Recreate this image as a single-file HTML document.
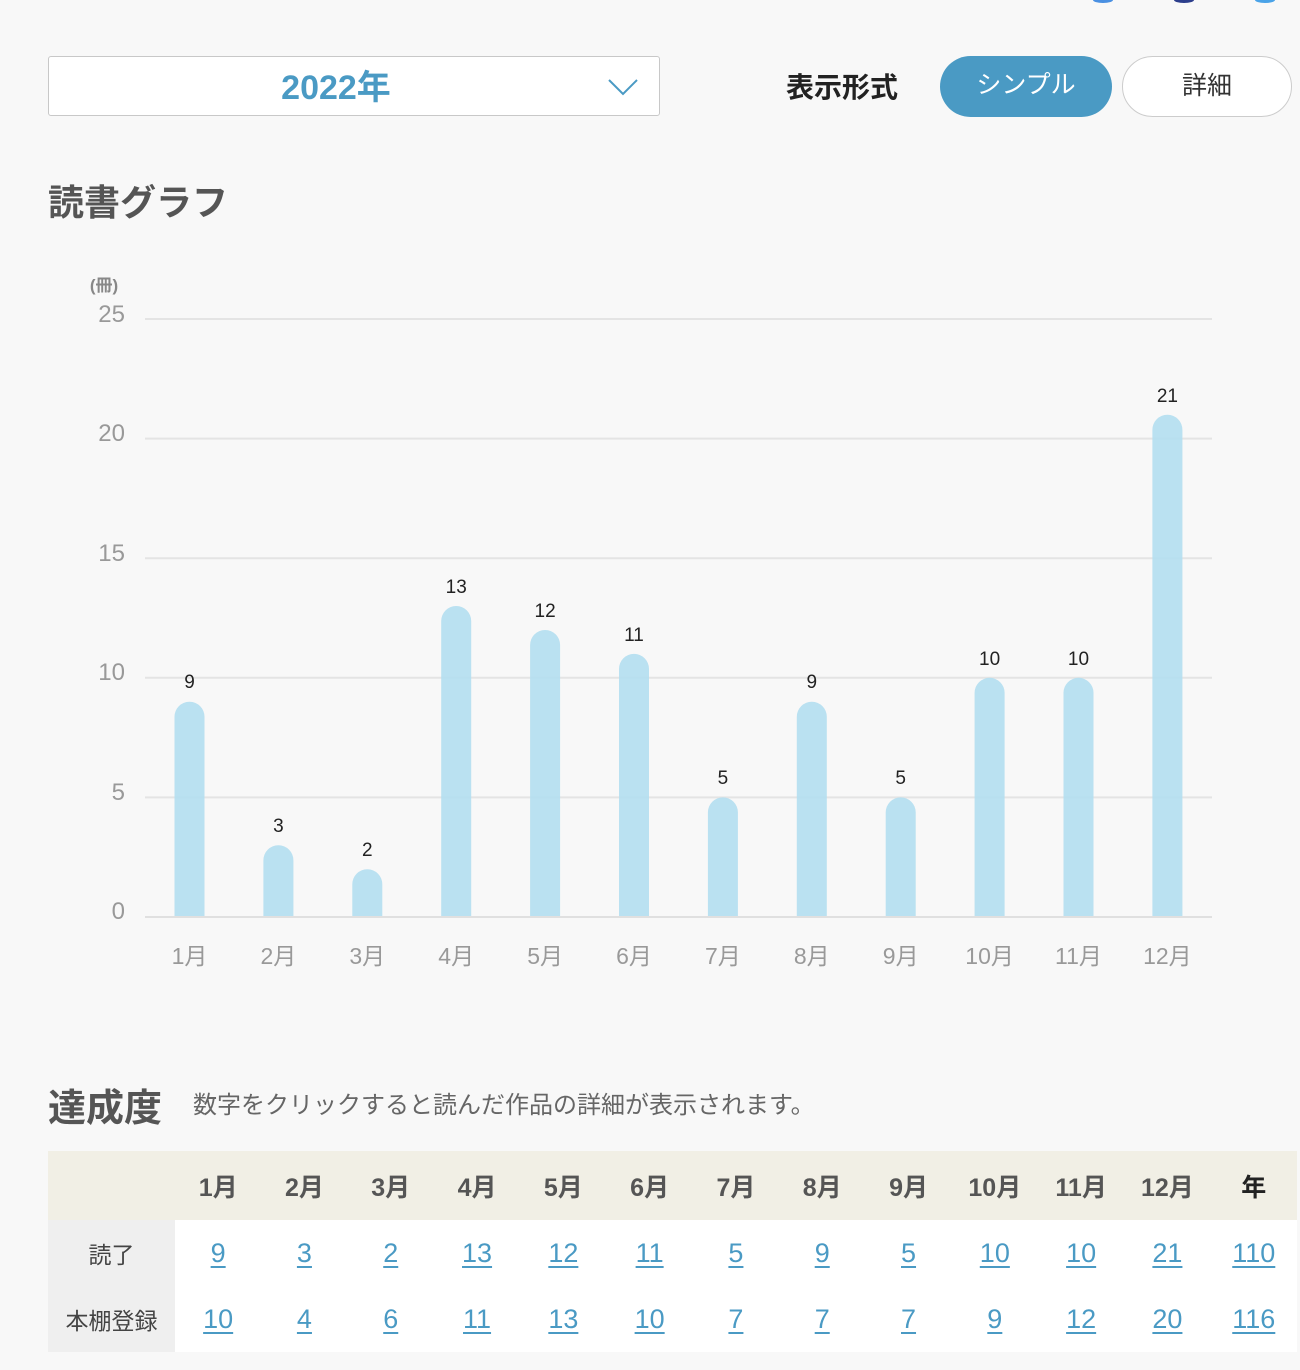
<!DOCTYPE html>
<html><head><meta charset="utf-8">
<style>
html,body{margin:0;padding:0;background:#f8f8f8;width:1300px;height:1370px;overflow:hidden;font-family:"Liberation Sans","Noto Sans CJK JP",sans-serif;}
.abs{position:absolute}
.sel{left:48px;top:56px;width:612px;height:60px;background:#fff;border:1px solid #c8c8c8;border-radius:3px;box-sizing:border-box}
.sel span{position:absolute;left:0;width:574px;top:3px;text-align:center;font-size:34px;font-weight:bold;color:#4a9ac4}
.lbl{left:786px;top:66px;font-size:28px;font-weight:bold;color:#222}
.btn{top:56px;height:61px;border-radius:31px;box-sizing:border-box;text-align:center;line-height:58px;font-size:25px}
.b1{left:940px;width:172px;background:#4a9ac4;color:#fff}
.b2{left:1122px;width:170px;background:#fff;border:1.5px solid #ccc;color:#333}
h2{margin:0;position:absolute;font-size:36px;color:#555;font-weight:bold}
table{position:absolute;left:48px;top:1151px;width:1249px;border-collapse:collapse;table-layout:fixed}
td{text-align:center;padding:0}
tr.h td{background:#f1efe5;height:69px;font-size:25px;font-weight:bold;color:#555}
tr.r td{background:#fff;height:66px;font-size:27px}
tr.r td:first-child{background:#efefef;font-size:23px;color:#444}
a{color:#4a9ac4;text-decoration:underline;text-underline-offset:4px}
</style></head><body>
<svg class="abs" style="left:0;top:0" width="1300" height="10"><ellipse cx="1103" cy="0" rx="10" ry="3" fill="#4a90e2"/><ellipse cx="1184" cy="0" rx="10" ry="3" fill="#2c3e8c"/><ellipse cx="1265" cy="0" rx="10" ry="3" fill="#4aa3e8"/></svg>
<div class="abs sel"><span>2022年</span>
<svg class="abs" style="left:558px;top:20px" width="32" height="20"><path d="M2 3 L16 17 L30 3" fill="none" stroke="#4a9ac4" stroke-width="2"/></svg></div>
<div class="abs lbl">表示形式</div>
<div class="abs btn b1">シンプル</div>
<div class="abs btn b2">詳細</div>
<h2 style="left:48px;top:174px">読書グラフ</h2>

<svg class="abs" style="left:0;top:0" width="1300" height="1000" font-family="Liberation Sans, Noto Sans CJK JP, sans-serif">
<text x="104" y="291" font-size="17" fill="#888" text-anchor="middle" font-weight="bold">(冊)</text>
<g fill="#999" font-size="24" text-anchor="end">
<text x="125" y="322">25</text><text x="125" y="441">20</text><text x="125" y="561">15</text><text x="125" y="680">10</text><text x="125" y="800">5</text><text x="125" y="919">0</text>
</g>
<g stroke="#e4e4e4" stroke-width="2">
<line x1="145" x2="1212" y1="319" y2="319"/><line x1="145" x2="1212" y1="438.6" y2="438.6"/><line x1="145" x2="1212" y1="558.2" y2="558.2"/><line x1="145" x2="1212" y1="677.8" y2="677.8"/><line x1="145" x2="1212" y1="797.4" y2="797.4"/>
</g>
<g fill="#b3def0" fill-opacity="0.9">
<path d="M174.5 917V716.7A15 15 0 0 1 204.5 716.7V917Z"/>
<path d="M263.4 917V860.2A15 15 0 0 1 293.4 860.2V917Z"/>
<path d="M352.3 917V884.2A15 15 0 0 1 382.3 884.2V917Z"/>
<path d="M441.2 917V621A15 15 0 0 1 471.2 621V917Z"/>
<path d="M530.1 917V645A15 15 0 0 1 560.1 645V917Z"/>
<path d="M619 917V668.9A15 15 0 0 1 649 668.9V917Z"/>
<path d="M707.9 917V812.4A15 15 0 0 1 737.9 812.4V917Z"/>
<path d="M796.8 917V716.7A15 15 0 0 1 826.8 716.7V917Z"/>
<path d="M885.7 917V812.4A15 15 0 0 1 915.7 812.4V917Z"/>
<path d="M974.6 917V692.8A15 15 0 0 1 1004.6 692.8V917Z"/>
<path d="M1063.5 917V692.8A15 15 0 0 1 1093.5 692.8V917Z"/>
<path d="M1152.4 917V429.7A15 15 0 0 1 1182.4 429.7V917Z"/>
</g>
<line x1="145" x2="1212" y1="917" y2="917" stroke="#e0e0e0" stroke-width="2"/>
<g fill="#222" font-size="19" text-anchor="middle">
<text x="189.5" y="688">9</text><text x="278.4" y="832">3</text><text x="367.3" y="856">2</text><text x="456.2" y="593">13</text><text x="545.1" y="617">12</text><text x="634" y="641">11</text><text x="722.9" y="784">5</text><text x="811.8" y="688">9</text><text x="900.7" y="784">5</text><text x="989.6" y="665">10</text><text x="1078.5" y="665">10</text><text x="1167.4" y="402">21</text>
</g>
<g fill="#999" font-size="23" text-anchor="middle">
<text x="189.5" y="964">1月</text><text x="278.4" y="964">2月</text><text x="367.3" y="964">3月</text><text x="456.2" y="964">4月</text><text x="545.1" y="964">5月</text><text x="634" y="964">6月</text><text x="722.9" y="964">7月</text><text x="811.8" y="964">8月</text><text x="900.7" y="964">9月</text><text x="989.6" y="964">10月</text><text x="1078.5" y="964">11月</text><text x="1167.4" y="964">12月</text>
</g>
</svg>

<h2 style="left:48px;top:1077px;font-size:38px">達成度</h2>
<div class="abs" style="left:193px;top:1085px;font-size:24px;color:#666">数字をクリックすると読んだ作品の詳細が表示されます。</div>

<table>
<colgroup><col style="width:127px"><col span="13"></colgroup>
<tr class="h"><td></td><td>1月</td><td>2月</td><td>3月</td><td>4月</td><td>5月</td><td>6月</td><td>7月</td><td>8月</td><td>9月</td><td>10月</td><td>11月</td><td>12月</td><td style="color:#222">年</td></tr>
<tr class="r"><td>読了</td><td><a>9</a></td><td><a>3</a></td><td><a>2</a></td><td><a>13</a></td><td><a>12</a></td><td><a>11</a></td><td><a>5</a></td><td><a>9</a></td><td><a>5</a></td><td><a>10</a></td><td><a>10</a></td><td><a>21</a></td><td><a>110</a></td></tr>
<tr class="r"><td>本棚登録</td><td><a>10</a></td><td><a>4</a></td><td><a>6</a></td><td><a>11</a></td><td><a>13</a></td><td><a>10</a></td><td><a>7</a></td><td><a>7</a></td><td><a>7</a></td><td><a>9</a></td><td><a>12</a></td><td><a>20</a></td><td><a>116</a></td></tr>
</table>
</body></html>
